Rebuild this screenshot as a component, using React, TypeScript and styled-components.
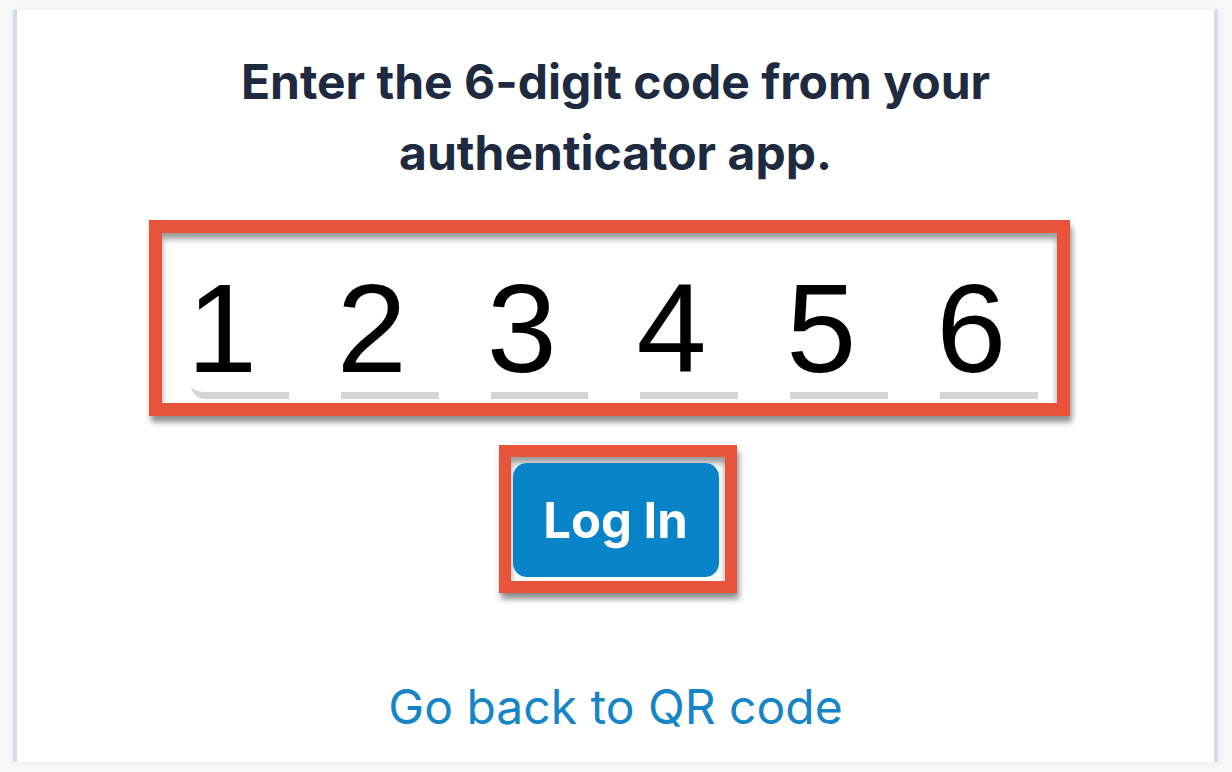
import React from 'react'
import styled, { createGlobalStyle } from 'styled-components'

const GlobalStyle = createGlobalStyle`
  html, body {
    margin: 0;
    padding: 0;
    background: #f8f8f8;
  }
`

const digits = ['1', '2', '3', '4', '5', '6']

export default function App() {
  return (
    <>
      <GlobalStyle />
      <Page>
        <Card>
          <Heading>
            Enter the 6-digit code from your
            <br />
            authenticator app.
          </Heading>
          <CodeFrame>
            <CodeRow>
              {digits.map((d, i) => (
                <DigitCell key={i} $first={i === 0}>
                  <Digit>{d}</Digit>
                </DigitCell>
              ))}
            </CodeRow>
          </CodeFrame>
          <ButtonFrame>
            <LoginButton type="button">Log In</LoginButton>
          </ButtonFrame>
          <BackLink href="#">Go back to QR code</BackLink>
        </Card>
      </Page>
    </>
  )
}

const Page = styled.div`
  display: flex;
  padding: 10px 14px 10px 13px;
  width: 1232px;
  height: 772px;
  box-sizing: border-box;
`

const Card = styled.main`
  flex: 1;
  display: flex;
  flex-direction: column;
  align-items: center;
  padding-top: 36px;
  background: #ffffff;
  border-left: 4px solid #d3dcea;
  border-right: 4px solid #d3dcea;
  box-shadow: 0 0 10px rgba(0, 0, 0, 0.06);
  box-sizing: border-box;
`

const Heading = styled.h1`
  margin: 0;
  font-family: Inter, "Noto Sans", sans-serif;
  font-weight: 700;
  font-size: 48px;
  line-height: 71px;
  color: #1d2a40;
  text-align: center;
`

const CodeFrame = styled.div`
  margin: 32px 12px 0 0;
  width: 921px;
  padding: 33px 19px 4px 29px;
  border: 13px solid #e8533c;
  box-sizing: border-box;
  box-shadow: 2px 6px 6px rgba(0, 0, 0, 0.45), inset 0 6px 6px rgba(0, 0, 0, 0.4);
`

const CodeRow = styled.div`
  display: flex;
  gap: 52px;
`

const DigitCell = styled.div<{ $first: boolean }>`
  width: 98px;
  display: flex;
  flex-direction: column;
  border-bottom: 7px solid #d4d4d4;
  border-bottom-left-radius: ${(p) => (p.$first ? '14px' : '0')};
`

const Digit = styled.span`
  margin-left: -4px;
  font-family: "Liberation Sans", Arial, sans-serif;
  font-size: 126px;
  line-height: 1;
  color: #000000;
`

const ButtonFrame = styled.div`
  margin: 29px 0 0 4px;
  padding: 6px 6px 4px 2px;
  border: 12px solid #e8533c;
  box-shadow: 2px 6px 6px rgba(0, 0, 0, 0.45), inset 0 6px 6px rgba(0, 0, 0, 0.4);
`

const LoginButton = styled.button`
  display: block;
  width: 206px;
  height: 114px;
  border: none;
  border-radius: 14px;
  background: #0984c8;
  color: #ffffff;
  font-family: Inter, "Noto Sans", sans-serif;
  font-weight: 700;
  font-size: 49px;
  cursor: pointer;
`

const BackLink = styled.a`
  margin-top: 84px;
  font-family: Inter, "Noto Sans", sans-serif;
  font-size: 48px;
  line-height: normal;
  color: #1585c7;
  text-decoration: none;
`
